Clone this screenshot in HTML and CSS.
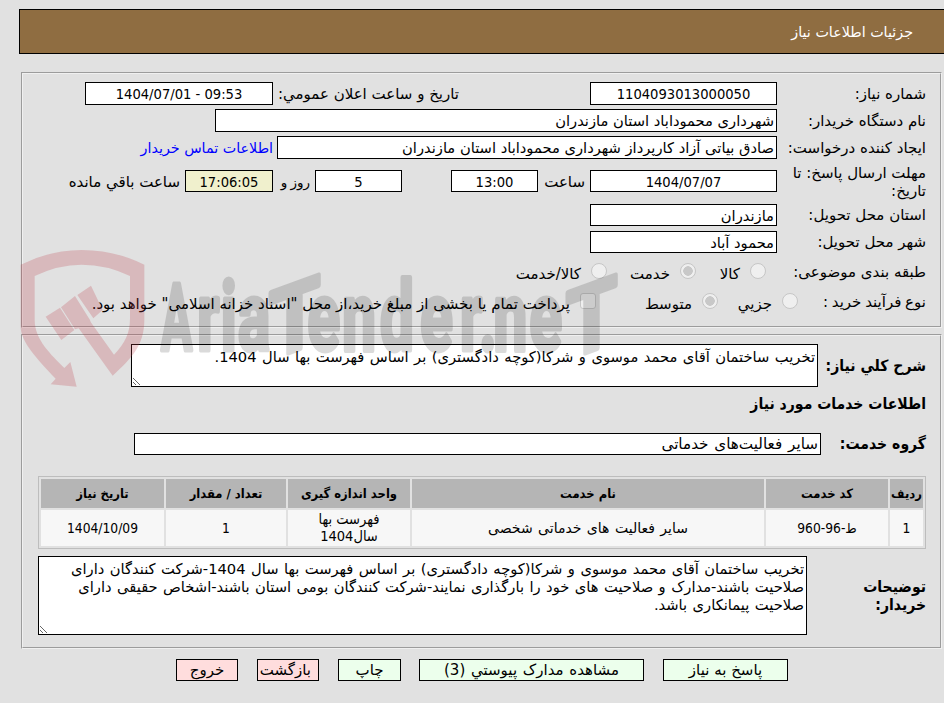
FILE: index.html
```html
<!DOCTYPE html>
<html lang="fa" dir="rtl">
<head>
  <meta charset="UTF-8">
  <meta name="viewport" content="width=device-width, initial-scale=1.0">
  <title>جزئیات اطلاعات نیاز</title>
  <link rel="stylesheet" href="styles.css">
</head>
<body>
  <header>جزئیات اطلاعات نیاز</header>

  <form>
    <fieldset class="info">
      <div class="row">
        <label class="name">شماره نیاز:</label>
        <input class="w-std num" value="1104093013000050" readonly>
        <label class="announce">تاریخ و ساعت اعلان عمومي:</label>
        <input class="w-date num" dir="ltr" value="1404/07/01 - 09:53" readonly>
      </div>
      <div class="row">
        <label class="name">نام دستگاه خریدار:</label>
        <input class="w-org" value="شهرداری محموداباد استان مازندران" readonly>
      </div>
      <div class="row">
        <label class="name">ایجاد کننده درخواست:</label>
        <input class="w-creator" value="صادق بیاتی آزاد کارپرداز شهرداری محموداباد استان مازندران" readonly>
        <a class="contact" href="#">اطلاعات تماس خریدار</a>
      </div>
      <div class="row deadline">
        <label class="name">مهلت ارسال پاسخ: تا تاریخ:</label>
        <input class="w-std num" value="1404/07/07" readonly>
        <label class="hour">ساعت</label>
        <input class="w-small num" value="13:00" readonly>
        <input class="w-small num days" value="5" readonly>
        <label class="and">روز و</label>
        <input class="w-left num remain" value="17:06:05" readonly>
        <label class="remain-text">ساعت باقي مانده</label>
      </div>
      <div class="row province">
        <label class="name">استان محل تحویل:</label>
        <input class="w-std" value="مازندران" readonly>
      </div>
      <div class="row city">
        <label class="name">شهر محل تحویل:</label>
        <input class="w-std" value="محمود آباد" readonly>
      </div>
      <div class="row options subject">
        <label class="name">طبقه بندی موضوعی:</label>
        <input type="radio" disabled><label class="opt">کالا</label>
        <input type="radio" checked disabled><label class="opt">خدمت</label>
        <input type="radio" disabled><label class="opt">کالا/خدمت</label>
      </div>
      <div class="row options process">
        <label class="name">نوع فرآیند خرید :</label>
        <input type="radio" disabled><label class="opt">جزیي</label>
        <input type="radio" checked disabled><label class="opt">متوسط</label>
        <input type="checkbox" disabled><label class="opt">پرداخت تمام یا بخشی از مبلغ خرید،از محل "اسناد خزانه اسلامی" خواهد بود.</label>
      </div>
    </fieldset>

    <fieldset class="services">
      <div class="line summary">
        <label>شرح کلي نیاز:</label>
        <textarea readonly>تخریب ساختمان آقای محمد موسوی و شرکا(کوچه دادگستری) بر اساس فهرست بها سال 1404.</textarea>
      </div>
      <h2>اطلاعات خدمات مورد نیاز</h2>
      <div class="line group">
        <label>گروه خدمت:</label>
        <input value="سایر فعالیت‌های خدماتی" readonly>
      </div>
      <table>
        <thead>
          <tr><th class="c-row">ردیف</th><th class="c-code">کد خدمت</th><th>نام خدمت</th><th class="c-unit">واحد اندازه گیری</th><th class="c-count">تعداد / مقدار</th><th class="c-date">تاریخ نیاز</th></tr>
        </thead>
        <tbody>
          <tr><td>1</td><td>ط-96-960</td><td class="service">سایر فعالیت های خدماتی شخصی</td><td class="unit">فهرست بها سال1404</td><td>1</td><td>1404/10/09</td></tr>
        </tbody>
      </table>
      <div class="line notes">
        <label>توضیحات خریدار:</label>
        <textarea readonly>تخریب ساختمان آقای محمد موسوی و شرکا(کوچه دادگستری) بر اساس فهرست بها سال 1404-شرکت کنندگان دارای
صلاحیت باشند-مدارک و صلاحیت های خود را بارگذاری نمایند-شرکت کنندگان بومی استان باشند-اشخاص حقیقی دارای
صلاحیت پیمانکاری باشد.</textarea>
      </div>
    </fieldset>

    <div class="buttons">
      <button type="button" class="b-reply">پاسخ به نیاز</button>
      <button type="button" class="b-files">مشاهده مدارک پیوستي (3)</button>
      <button type="button" class="b-print">چاپ</button>
      <button type="button" class="b-back">بازگشت</button>
      <button type="button" class="b-exit">خروج</button>
    </div>
  </form>

  <svg class="watermark" viewBox="0 0 660 150">
    <g class="shield" transform="scale(.33333)">
      <path d="M62 74Q150 30 245 30Q345 30 433 74V240C433 315 395 355 338 407L236 265L225 268L183 202L225 168L270 240L272 246L342 344C375 310 390 280 390 235V108Q320 74 245 74Q175 74 104 108V240C104 300 155 345 193 384L211 366L230 440L152 433L167 416C110 355 62 305 62 260Z"/>
      <path d="M137 230L180 203L223 270L184 300ZM232 165L273 137L308 210L280 235Z"/>
    </g>
    <g class="brand">
      <text transform="translate(161 110) scale(.5 1)" font-size="93">A</text>
      <text transform="translate(0 110) scale(.62 1)" x="318 356 384" font-size="97">ria</text>
      <text transform="translate(269 120) skewY(-20) scale(.88 1)" font-size="94">T</text>
      <text transform="translate(0 110) scale(.62 1)" x="496 552 613 678 742 773 796 854" font-size="97">ender.ne</text>
      <text transform="translate(566 120) skewY(-20) scale(.88 1)" font-size="94">T</text>
    </g>
  </svg>
</body>
</html>
```
FILE: styles.css
```css
* { box-sizing: border-box; }
body { margin: 0; padding-top: 9px; height: 703px; overflow: hidden; position: relative; background: #e1e1e1; color: #000; font-family: "DejaVu Sans", sans-serif; font-size: 14.7px; line-height: 18px; }
header { margin-left: 19px; height: 45px; padding: 13px 31px 0 0; background: #8f6d41; border: 1px solid #000; border-right: 0; color: #fff; font-size: 14.3px; }
form { width: 921px; margin: 18px 2px 0 21px; }
fieldset { margin: 0; min-width: 0; border: 2px groove #f0f0f0; }
input, textarea { margin: 0; padding: 0 2px; border: 1px solid #000; border-radius: 0; background: #fff; color: #000; font: inherit; outline: none; }
a { color: #00f; text-decoration: none; }

.info { height: 256px; padding: 8px 14px 0 0; }
.row { display: flex; height: 23px; margin-bottom: 4px; align-items: center; white-space: nowrap; }
.row > * { flex: none; }
.row input { height: 100%; }
.row label { font-size: 15px; }
.name { width: 149px; }
.row .num { text-align: center; font-family: "DejaVu Sans Condensed", sans-serif; font-stretch: condensed; font-size: 14.6px; }
.w-std { width: 187px; }
.w-date { width: 188px; }
.w-org { width: 562px; }
.w-creator { width: 500px; }
.w-small { width: 87px; }
.w-left { width: 88px; }
.announce { width: 317px; padding-right: 131px; }
.contact { padding-right: 4px; font-size: 14.3px; }
.deadline { height: 22px; margin-top: 11px; margin-bottom: 12px; }
.deadline label { padding-top: 2px; }
.deadline .name { padding-left: 11px; white-space: normal; }
.hour { width: 52px; padding-right: 5px; }
.days { margin-right: 49px; }
.row .and { width: 42px; padding-right: 5px; font-size: 13.5px; word-spacing: -1px; }
.remain { background: #f0f0cd; }
.remain-text { padding-right: 5px; }
.province, .city { height: 22px; margin-bottom: 5px; }

.options { height: 26px; margin: 0 0 4px; align-items: flex-start; padding-top: 5px; }
.options .opt { padding-top: 2px; }
.row input[type=radio], .row input[type=checkbox] { appearance: none; width: 16px; height: 16px; margin-left: -1px; padding: 0; border: 1px solid #c6c6c6; border-radius: 50%; background: #efefef; }
.row input[type=checkbox] { border-radius: 3px; }
.row input:checked { background: radial-gradient(circle, #c8c8c8 4.5px, #efefef 5px); }
.subject .name { width: 160px; }
.subject .opt { width: 55px; padding-right: 11px; }
.subject .opt:nth-of-type(3) { width: 74px; }
.process .name { width: 128px; word-spacing: -1px; }
.process .opt { width: 65px; padding-right: 11px; }
.process .opt:nth-of-type(3) { width: 107px; }

.services { height: 315px; margin-top: 6px; padding: 8px 14px 0 15px; }
.line { display: flex; align-items: center; }
.line > * { flex: none; }
.line label, h2 { font-family: "DejaVu Sans Condensed", sans-serif; font-stretch: condensed; font-size: 15.6px; font-weight: bold; }
.line textarea { display: block; resize: both; overflow: hidden; padding: 3px 2px; word-spacing: .8px; }
.summary label { width: 108px; }
.summary textarea { width: 687px; height: 43px; }
h2 { margin: 8px 0 20px; line-height: 18px; }
.group label { width: 105px; }
.group input { width: 687px; height: 22px; font-size: 15.2px; word-spacing: 1px; }
table { width: 888px; height: 73px; margin: 21px 0 7px; table-layout: fixed; border: 1px solid #bdbdbd; border-spacing: 2px; font-family: "DejaVu Sans Condensed", sans-serif; font-stretch: condensed; font-size: 13.7px; line-height: 17px; text-align: center; }
th, td { padding: 0 1px; }
th { height: 29px; background: #b5b5b5; font-size: 12.9px; }
td { height: 36px; background: #f7f7f7; }
.c-row { width: 33px; }
.c-code { width: 122px; }
.c-unit { width: 122px; }
.c-count { width: 120px; }
.c-date { width: 123px; }
.service { font-family: "DejaVu Sans", sans-serif; font-stretch: normal; font-size: 14px; word-spacing: 1px; }
.unit { padding: 0 20px; font-size: 14.5px; }
.notes label { width: 119px; padding-left: 50px; }
.notes textarea { width: 769px; height: 79px; }

.buttons { display: flex; gap: 19px; margin-top: 10px; padding-right: 154px; }
button { height: 22px; padding: 0; border: 1px solid #000; background: #ecffec; color: #000; font: inherit; font-size: 15px; }
.b-reply { width: 125px; }
.b-files { width: 225px; margin-left: -1px; word-spacing: 1px; }
.b-print { width: 63px; }
.b-back, .b-exit { width: 62px; background: #fdd; }
.b-back { padding-right: 7px; text-align: right; }

.watermark { position: absolute; left: 0; top: 240px; width: 660px; height: 150px; direction: ltr; pointer-events: none; }
.shield { fill: rgba(190, 60, 70, .24); }
.brand { opacity: .14; stroke: #000; stroke-width: 5px; stroke-linejoin: round; font-family: Roboto, sans-serif; font-weight: bold; }
```
